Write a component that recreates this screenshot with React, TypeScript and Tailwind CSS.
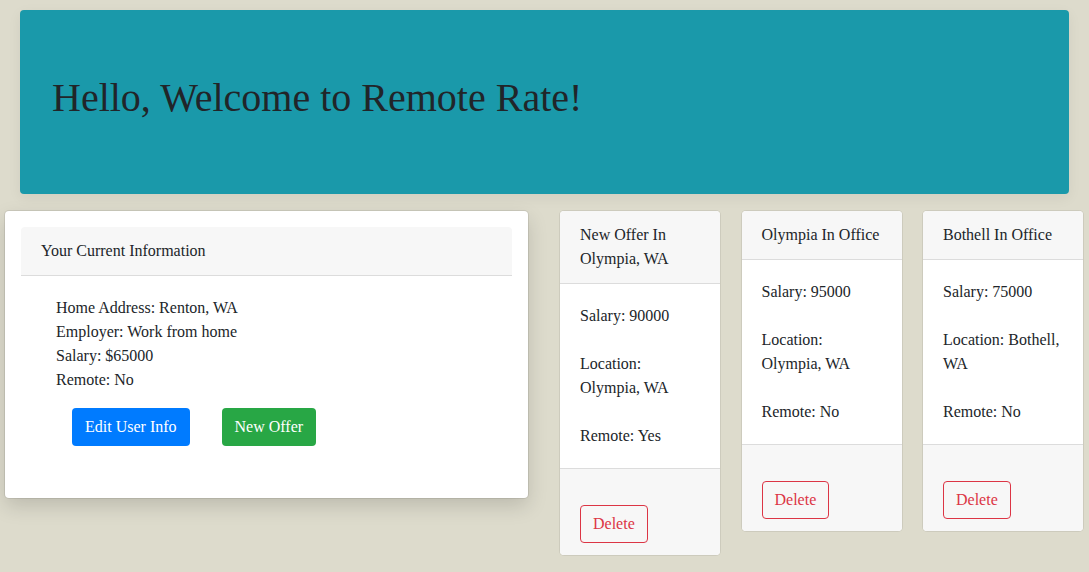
import React from 'react';

interface Offer {
  title: string;
  salary: string;
  location: string;
  remote: string;
}

const offers: Offer[] = [
  { title: 'New Offer In Olympia, WA', salary: '90000', location: 'Olympia, WA', remote: 'Yes' },
  { title: 'Olympia In Office', salary: '95000', location: 'Olympia, WA', remote: 'No' },
  { title: 'Bothell In Office', salary: '75000', location: 'Bothell, WA', remote: 'No' },
];

const OfferCard: React.FC<{ offer: Offer }> = ({ offer }) => (
  <div className="w-[160px] bg-white rounded ring-1 ring-black/[0.07] overflow-hidden">
    <div className="bg-[#f7f7f7] border-b border-[#dcdcdc] px-5 py-3">{offer.title}</div>
    <div className="p-5 flex flex-col gap-6">
      <p>Salary: {offer.salary}</p>
      <p>Location: {offer.location}</p>
      <p>Remote: {offer.remote}</p>
    </div>
    {/* footer */}
    <div className="bg-[#f7f7f7] border-t border-[#dcdcdc] px-5 pt-[36px] pb-3">
      <button className="h-[38px] px-3 border border-[#dc3545] text-[#dc3545] rounded">Delete</button>
    </div>
  </div>
);

export default function App() {
  return (
    <div
      className="min-h-[572px] bg-[#dddbcc] text-[#212529] text-base leading-6 pt-[10px] pb-4"
      style={{ fontFamily: '"Liberation Serif", "Times New Roman", serif' }}
    >
      <div className="mx-5 bg-[#1a99aa] rounded px-8 py-16 shadow-[0_4px_14px_rgba(0,0,0,0.06)]">
        <h1 className="text-[40px] leading-[1.2] mb-2">Hello, Welcome to Remote Rate!</h1>
      </div>

      <div className="flex items-start pl-[5px] mt-[17px]">
        {/* current info */}
        <div className="w-[523px] bg-white rounded p-4 pb-[36px] shadow-[0_8px_20px_rgba(0,0,0,0.15)] ring-1 ring-black/[0.08]">
          <div className="bg-[#f7f7f7] border-b border-[#dcdcdc] px-5 py-3 rounded-t">Your Current Information</div>
          <div className="pl-[35px] pt-5">
            <p>Home Address: Renton, WA</p>
            <p>Employer: Work from home</p>
            <p>Salary: $65000</p>
            <p>Remote: No</p>
            <div className="flex mt-4 pb-4">
              <button className="mx-4 h-[38px] px-[13px] bg-[#007bff] text-white rounded">Edit User Info</button>
              <button className="mx-4 h-[38px] px-[13px] bg-[#28a745] text-white rounded">New Offer</button>
            </div>
          </div>
        </div>

        <div className="ml-8 flex items-start gap-[21.5px]">
          {offers.map((o) => (
            <OfferCard key={o.title} offer={o} />
          ))}
        </div>
      </div>
    </div>
  );
}
